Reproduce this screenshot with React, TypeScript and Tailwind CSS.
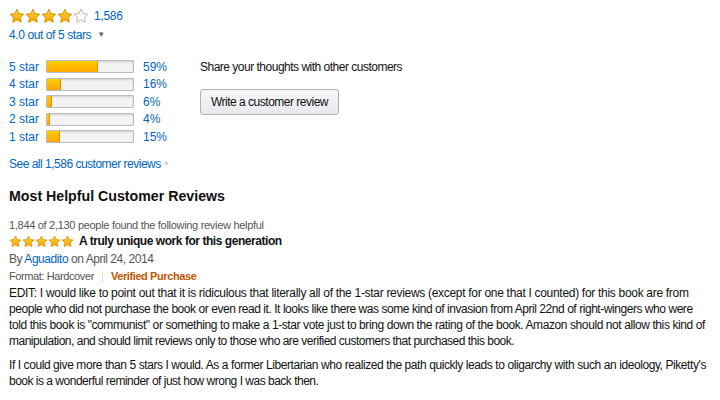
const rows = [
  { label: '5 star', pct: 59 },
  { label: '4 star', pct: 16 },
  { label: '3 star', pct: 6 },
  { label: '2 star', pct: 4 },
  { label: '1 star', pct: 15 },
];

// review body, broken where the original wraps
const para1 = [
  { text: 'EDIT: I would like to point out that it is ridiculous that literally all of the 1-star reviews (except for one that I counted) for this book are from', cls: 'tracking-[-0.3px]' },
  { text: 'people who did not purchase the book or even read it. It looks like there was some kind of invasion from April 22nd of right-wingers who were', cls: 'tracking-[-0.45px]' },
  { text: 'told this book is "communist" or something to make a 1-star vote just to bring down the rating of the book. Amazon should not allow this kind of', cls: 'tracking-[-0.41px]' },
  { text: 'manipulation, and should limit reviews only to those who are verified customers that purchased this book.', cls: 'tracking-[-0.5px]' },
];
const para2 = [
  { text: "If I could give more than 5 stars I would. As a former Libertarian who realized the path quickly leads to oligarchy with such an ideology, Piketty's", cls: 'tracking-[-0.42px]' },
  { text: 'book is a wonderful reminder of just how wrong I was back then.', cls: 'tracking-[-0.5px]' },
];

const Star = ({ fill, size = 16 }: { fill: 'full' | 'empty'; size?: number }) => (
  <svg width={size} height={size} viewBox="0 0 24 24">
    <defs>
      <linearGradient id="starFill" x1="0" y1="0" x2="0" y2="1">
        <stop offset="0" stopColor="#ffd33c" />
        <stop offset="1" stopColor="#f6a400" />
      </linearGradient>
    </defs>
    <path
      d="M12 1.8l3.1 6.6 7.2.9-5.3 5 1.4 7.1L12 17.9l-6.4 3.5 1.4-7.1-5.3-5 7.2-.9z"
      fill={fill === 'empty' ? '#fff' : 'url(#starFill)'}
      stroke={fill === 'empty' ? '#b5b0a4' : '#d58a00'}
      strokeWidth="1.3"
      strokeLinejoin="round"
    />
  </svg>
);

export default function App() {
  return (
    <main className="w-[720px] h-[400px] overflow-hidden bg-white px-[9px] pt-[7px] text-[13px] text-[#111] font-['Liberation_Sans',Arial,sans-serif]">
      <div className="flex items-center gap-[5px] h-[18px]">
        <div className="flex">
          <Star fill="full" />
          <Star fill="full" />
          <Star fill="full" />
          <Star fill="full" />
          <Star fill="empty" />
        </div>
        <span className="text-[#0066c0] text-[12px] leading-none tracking-[-0.3px]">1,586</span>
      </div>
      <div className="flex items-center gap-[6px] mt-[2px] h-[16px] text-[12px] text-[#0066c0] tracking-[-0.4px]">
        <span>4.0 out of 5 stars</span>
        <span className="text-[#666] text-[8px]">▼</span>
      </div>

      {/* histogram + write review */}
      <div className="flex mt-[15px]">
        <div className="flex flex-col w-[191px]">
          {rows.map((r) => (
            <div key={r.label} className="flex items-center h-[17.5px] text-[12px] text-[#0066c0]">
              <span className="w-[37px]">{r.label}</span>
              <div className="w-[88px] h-[13px] border border-[#b9bcc2] bg-[#f3f3f3] shadow-[inset_0_1px_2px_rgba(0,0,0,0.15)] rounded-[1px] overflow-hidden">
                <div
                  className="h-full bg-gradient-to-b from-[#ffce00] to-[#ffa700] border-r border-[#e09500]"
                  style={{ width: `${Math.max(r.pct, 3)}%` }}
                />
              </div>
              <span className="ml-[9px]">{r.pct}%</span>
            </div>
          ))}
        </div>
        <div className="flex flex-col items-start">
          <span className="text-[12px] leading-[19px] tracking-[-0.5px]">Share your thoughts with other customers</span>
          <button className="mt-[12px] h-[26px] px-[10px] text-[12px] tracking-[-0.5px] border border-[#adb1b8] rounded-[3px] bg-gradient-to-b from-[#f7f8fa] to-[#e7e9ec] text-[#111]">
            Write a customer review
          </button>
        </div>
      </div>

      <div className="mt-[9px] text-[12px] text-[#0066c0] flex items-center gap-[4px] tracking-[-0.5px]">
        <span>See all 1,586 customer reviews</span>
        <span className="text-[#777] text-[9px]">›</span>
      </div>

      <h2 className="mt-[13px] text-[14.2px] font-bold leading-[20px]">Most Helpful Customer Reviews</h2>

      <div className="mt-[12px] text-[11px] text-[#555] leading-[15px] tracking-[-0.3px]">
        1,844 of 2,130 people found the following review helpful
      </div>
      <div className="flex items-center gap-[5px] h-[17px]">
        <div className="flex">
          {[0, 1, 2, 3, 4].map((i) => (
            <Star key={i} fill="full" size={13} />
          ))}
        </div>
        <span className="font-bold text-[12px] tracking-[-0.45px]">A truly unique work for this generation</span>
      </div>
      <div className="text-[12px] text-[#555] leading-[18px] tracking-[-0.45px]">
        By <span className="text-[#0066c0]">Aguadito</span> on April 24, 2014
      </div>
      <div className="flex items-center text-[11px] text-[#555] leading-[17px] tracking-[-0.4px]">
        <span>Format: Hardcover</span>
        <span className="mx-[8px] h-[11px] w-px bg-[#ddd]" />
        <span className="font-bold text-[#c45500]">Verified Purchase</span>
      </div>
      <div className="text-[12px] leading-[16px] text-[#111]">
        <p>
          {para1.map((l, i) => (
            <span key={i} className={`block whitespace-nowrap ${l.cls}`}>{l.text}</span>
          ))}
        </p>
        <p className="mt-[8px]">
          {para2.map((l, i) => (
            <span key={i} className={`block whitespace-nowrap ${l.cls}`}>{l.text}</span>
          ))}
        </p>
      </div>
    </main>
  );
}
